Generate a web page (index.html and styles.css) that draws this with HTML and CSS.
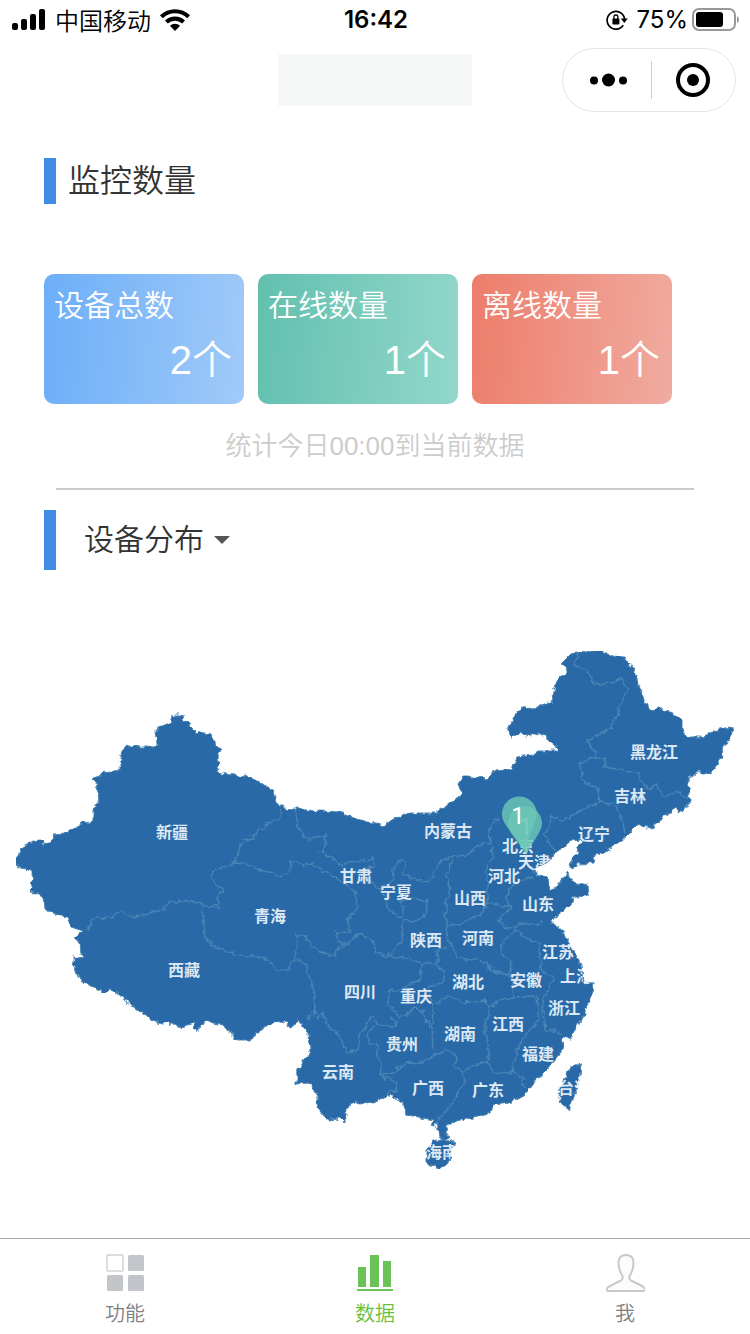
FILE: index.html
```html
<!DOCTYPE html>
<html lang="zh-CN">
<head>
<meta charset="utf-8">
<meta name="viewport" content="width=device-width">
<title>监控数量</title>
<link rel="stylesheet" href="styles.css">
</head>
<body>
<div class="status">
  <div class="status-left">
    <svg width="34" height="22" viewBox="0 0 34 22" aria-hidden="true"><rect x="0" y="14" width="6" height="7" rx="2"/><rect x="9" y="10" width="6" height="11" rx="2"/><rect x="18" y="5" width="6" height="16" rx="2"/><rect x="27" y="0" width="6" height="21" rx="2"/></svg>
    <span class="carrier">中国移动</span>
    <svg width="30" height="22" viewBox="0 0 30 22" aria-hidden="true"><path d="M0 6.300a21.500 21.500 0 0 1 30 0l-2.800 3a17.500 17.500 0 0 0-24.400 0z"/><path d="M5 11.600a14.400 14.400 0 0 1 20 0l-2.800 3a10.300 10.300 0 0 0-14.400 0z"/><path d="M9.900 16.800a7.300 7.300 0 0 1 10.200 0L15 22z"/></svg>
  </div>
  <time class="clock">16:42</time>
  <div class="status-right">
    <svg width="22" height="20" viewBox="0 0 22 20" aria-hidden="true"><path d="M17.200 15.200A8.800 8.800 0 1 1 18.600 9" fill="none" stroke="#000" stroke-width="1.700"/><path d="M14.800 8.600h7l-3.500 4.400z"/><rect x="6.400" y="8.600" width="7" height="5.800" rx="1"/><path d="M7.900 9V7a2 2 0 0 1 4 0v2" fill="none" stroke="#000" stroke-width="1.300"/></svg>
    <span class="percent">75%</span>
    <svg width="48" height="24" viewBox="0 0 48 24" aria-hidden="true"><rect x="1" y="1" width="42" height="21" rx="6" fill="none" stroke="#999" stroke-width="2"/><rect x="4" y="4" width="27" height="15" rx="3"/><path d="M45 8q2 1 2 3.500T45 15z" fill="#999"/></svg>
  </div>
</div>
<header class="nav">
  <div class="nav-title"></div>
  <div class="capsule">
    <button class="capsule-btn" type="button" aria-label="更多"><svg width="38" height="14" viewBox="0 0 38 14"><circle cx="4" cy="7.500" r="4"/><circle cx="18.500" cy="7" r="6.500"/><circle cx="33" cy="7.500" r="4"/></svg></button>
    <button class="capsule-btn" type="button" aria-label="关闭"><svg width="34" height="34" viewBox="0 0 34 34"><circle cx="17" cy="17" r="15" fill="none" stroke="#000" stroke-width="4"/><circle cx="17" cy="17" r="6"/></svg></button>
  </div>
</header>
<main>
  <h1 class="section-title">监控数量</h1>
  <section class="cards">
    <article class="card card-total"><h2>设备总数</h2><p>2个</p></article>
    <article class="card card-online"><h2>在线数量</h2><p>1个</p></article>
    <article class="card card-offline"><h2>离线数量</h2><p>1个</p></article>
  </section>
  <p class="note">统计今日00:00到当前数据</p>
  <hr class="rule">
  <div class="picker">
    <select class="picker-select" aria-label="设备分布"><option>设备分布</option></select>
    <svg width="16" height="8" viewBox="0 0 16 8" aria-hidden="true"><path d="M0 0h16L8 8z" fill="#555"/></svg>
  </div>
  <svg class="map" viewBox="0 570 750 668" role="img" aria-label="设备分布地图">
    <defs>
      <path id="land" d="M16 859L18 855 21 848 27 845 32 842 40 841 43 844 49 843 54 835 65 834 72 828 82 824 93 820 93 810 99 801 97 792 96 782 93 779 102 774 110 771 119 772 119 762 122 752 126 744 134 747 147 747 152 748 157 746 156 729 162 726 170 723 172 715 183 715 184 720 195 731 211 735 214 742 220 750 218 757 219 763 217 772 226 774 250 777 261 782 272 790 276 800 283 808 318 811 343 812 350 817 367 822 376 823 383 826 395 818 410 813 437 813 450 802 463 795 459 785 462 777 473 777 485 779 495 771 512 769 518 757 533 754 540 751 558 751 553 743 540 733 526 737 520 734 511 737 507 732 512 720 521 706 533 709 551 702 553 690 560 678 567 673 566 667 561 664 570 655 600 651 613 656 624 657 634 670 640 690 648 708 662 709 670 712 683 720 683 729 687 737 703 737 712 732 734 727 730 737 723 747 720 760 711 774 699 772 689 778 690 800 687 806 682 812 676 808 663 818 655 823 654 829 637 825 627 835 612 848 605 853 596 855 594 863 580 864 572 868 570 863 582 842 581 839 572 840 555 853 548 862 538 867 532 867 537 875 548 878 550 889 553 890 568 873 572 882 588 885 589 895 573 898 572 905 557 915 552 923 563 930 569 943 578 957 582 970 583 982 593 983 592 993 583 1017 570 1038 563 1038 562 1052 547 1070 536 1080 528 1092 517 1100 493 1105 490 1112 478 1117 460 1120 450 1122 447 1130 450 1138 441 1140 438 1130 437 1120 435 1128 431 1126 433 1120 408 1115 403 1110 403 1102 388 1094 377 1101 360 1104 355 1102 346 1108 346 1124 340 1118 327 1119 317 1108 318 1097 310 1083 297 1084 297 1073 302 1063 310 1053 309 1033 304 1028 297 1019 293 1027 285 1023 275 1021 257 1033 252 1040 233 1040 231 1032 223 1025 205 1021 197 1033 194 1023 180 1027 172 1023 162 1024 151 1019 143 1013 132 1006 124 999 115 991 108 990 105 993 90 985 78 978 76 971 73 965 73 957 82 958 80 947 75 937 83 931 71 927 68 916 57 914 45 908 43 898 37 893 28 892 33 887 32 872 28 869 18 868ZM433 1142L443 1139 456 1143 452 1149 450 1160 438 1169 427 1163 427 1150ZM574 1064L581 1066 580 1078 575 1094 569 1110 560 1102 561 1087 567 1072Z"/>
      <clipPath id="coast"><use href="#land"/></clipPath>
      <filter id="rough" x="0" y="0" width="100%" height="100%">
        <feTurbulence type="fractalNoise" baseFrequency="0.16" numOctaves="2" seed="4" result="noise"/>
        <feDisplacementMap in="SourceGraphic" in2="noise" scale="7" xChannelSelector="R" yChannelSelector="G"/>
      </filter>
    </defs>
    <g filter="url(#rough)">
    <use href="#land" class="land"/>
    <path class="borders" d="M88 930L95 917 112 918 121 911 128 916 140 917 152 912 162 910 167 904 180 901 193 901 203 906 220 907 217 897 223 891 215 882 211 872 235 863 243 840 253 838 260 829 268 824 278 820 282 810M295 809L298 827 307 840 325 835 326 843 320 851 335 860 342 867 348 862 367 861 373 858 373 867 360 872 366 881 380 888 392 882 395 865 402 859 406 863 402 873 413 879 427 883 442 860 450 857 467 855 478 845 490 843 489 830 495 818 500 820M380 888L387 900 387 908 400 917 406 907 399 902 412 897 427 902 425 917 412 922 402 920 402 940 392 953 387 957 377 953 373 942 360 933 352 940 345 947 338 947 335 957 323 953 312 948 307 937 297 935 295 957 288 970 277 970 267 958 243 956 217 948 205 938 203 907M235 863L242 862 260 870 270 872 282 877 291 870 291 861 303 865 313 863 327 873 342 882 355 892 358 907 348 920 350 932 335 933 339 942 347 945M295 957L307 967 313 987 315 1007 308 1020M315 1007L317 1020 323 1013 328 1027 337 1032 347 1052 358 1050 360 1035 372 1015 377 1025 397 1027 390 1015M387 957L403 957 423 963 420 980 400 990 390 990 388 1003 400 1017 417 1008 423 1013 430 1027M423 963L437 965 445 973 443 983 427 987 433 1005 432 1030 435 1050M377 1025L368 1033 368 1043 377 1045 377 1057 382 1063 380 1075 393 1072 407 1062 420 1063 435 1055 448 1050 457 1057 455 1067 463 1072 477 1063 488 1062M380 1075L397 1083 395 1090 387 1094M453 858L447 877 450 890 446 903 446 927 448 940 458 958 483 961 495 972 510 977M437 965L438 948 448 948M446 927L463 923 483 913 487 903 512 907M492 845L493 858 486 870 488 887 487 903M533 875L513 885 505 898 512 907 499 920 505 927 515 929 520 923 537 925 542 920M508 937L502 943 502 955 512 962 510 977M508 937L517 930 528 940 540 942 541 970 553 980 542 1000 545 1030 555 1031 563 1035M487 961L488 969 502 972 512 976 513 997 528 996 537 997M435 1003L448 995 463 1002 485 1000 490 1008 500 1000 513 997M490 1008L485 1027 488 1043 488 1062 493 1072 512 1073 517 1050 527 1033 540 1020 537 997M463 1072L465 1080 450 1107 438 1119M512 1073L522 1077 525 1088M578 655L573 665 588 670 593 683 612 684 620 679 628 688 619 707 618 715 610 728 587 741 595 752 595 758 579 763 585 785 597 787 600 802 580 811 561 822 552 815 545 837 555 850M595 758L605 758 605 767 625 771 638 773 642 783 649 789 657 785 663 797 677 792 690 799M600 802L615 805 622 820 625 833"/>
    </g>
    <g class="labels" clip-path="url(#coast)">
      <text x="654" y="758">黑龙江</text><text x="630" y="802">吉林</text><text x="594" y="840">辽宁</text><text x="448" y="837">内蒙古</text><text x="172" y="838">新疆</text><text x="356" y="882">甘肃</text><text x="396" y="898">宁夏</text><text x="518" y="852">北京</text><text x="534" y="868">天津</text><text x="504" y="882">河北</text><text x="470" y="904">山西</text><text x="538" y="910">山东</text><text x="270" y="922">青海</text><text x="426" y="946">陕西</text><text x="478" y="944">河南</text><text x="558" y="958">江苏</text><text x="184" y="976">西藏</text><text x="360" y="998">四川</text><text x="416" y="1002">重庆</text><text x="468" y="988">湖北</text><text x="526" y="986">安徽</text><text x="576" y="982">上海</text><text x="564" y="1014">浙江</text><text x="508" y="1030">江西</text><text x="460" y="1040">湖南</text><text x="402" y="1050">贵州</text><text x="538" y="1060">福建</text><text x="338" y="1078">云南</text><text x="428" y="1094">广西</text><text x="488" y="1096">广东</text><text x="574" y="1094">台湾</text><text x="442" y="1158">海南</text>
    </g>
    <g class="pins">
      <path opacity="0.800" d="M526 854L511 833a17 17 0 1 1 28 0Z"/>
      <text x="526" y="835" opacity="0.600">1</text>
      <path opacity="0.800" d="M525 850L505 824a17.500 17.500 0 1 1 30 -2Z"/>
      <text x="518" y="824">1</text>
    </g>
  </svg>
</main>
<nav class="tabs">
  <a class="tab" href="#features"><svg width="40" height="40" viewBox="0 0 40 40" aria-hidden="true"><rect x="2" y="2" width="16" height="16" rx="1" fill="#fff" stroke="#d0d1d3" stroke-width="1.500"/><g fill="#c2c5c9"><rect x="23" y="2" width="16" height="16" rx="1.500"/><rect x="2" y="22" width="16" height="16" rx="1.500"/><rect x="23" y="22" width="16" height="16" rx="1.500"/></g></svg><span>功能</span></a>
  <a class="tab tab-active" href="#data" aria-current="page"><svg width="40" height="40" viewBox="0 0 40 40" fill="#6bc257" aria-hidden="true"><rect x="3" y="14" width="8" height="20"/><rect x="15" y="2" width="9" height="32"/><rect x="28" y="8" width="8" height="26"/><rect x="2" y="36" width="36" height="2"/></svg><span>数据</span></a>
  <a class="tab" href="#me"><svg width="40" height="40" viewBox="0 0 40 40" fill="#fcfcfc" stroke="#c9c9c9" stroke-width="2" aria-hidden="true"><path d="M21 2C16 2 13.500 5 13.500 10C13.500 16 14.500 18 17 22C18.500 25 17.500 27 14 28.500L6 32.500C2 34.500 2 35 2 37Q2 38 4 38H38Q40 38 40 36.500C40 35 39 34 36 32.500L28 28.500C24.500 27 23.500 25 25 22C27.500 18 28.500 16 28.500 10C28.500 5 26 2 21 2Z"/></svg><span>我</span></a>
</nav>
</body>
</html>
```
FILE: styles.css
```css
* { box-sizing: border-box; }

body {
  margin: 0;
  min-height: 100vh;
  display: flex;
  flex-direction: column;
  background: #fff;
  color: #333;
  font-family: "Liberation Sans", "Noto Sans CJK SC", sans-serif;
  font-weight: 350;
}

h1, h2, p { margin: 0; font-weight: 350; }
svg { display: block; flex: none; }
button { border: 0; padding: 0; background: none; }

.status {
  display: grid;
  grid-template-columns: 1fr auto 1fr;
  align-items: center;
  height: 40px;
  padding: 0 10px 0 12px;
  color: #000;
  font-family: Inter, "Noto Sans CJK SC", sans-serif;
  font-size: 24px;
  line-height: 40px;
}
.status-left { display: flex; align-items: center; gap: 9px; }
.status-right { display: flex; align-items: center; justify-content: flex-end; }
.clock { font-weight: 600; }
.carrier { font-family: "Noto Sans CJK SC", sans-serif; }
.percent { margin: 0 4px 0 8px; font-weight: 400; }

.nav {
  display: grid;
  grid-template-columns: 1fr 194px 1fr;
  align-items: center;
  height: 80px;
  padding: 0 14px;
}
.nav-title { grid-column: 2; height: 52px; background: #f6f8f8; }
.capsule {
  justify-self: end;
  display: flex;
  align-items: center;
  width: 174px;
  height: 64px;
  border: 1px solid #e5e5e5;
  border-radius: 32px;
}
.capsule-btn {
  flex: 1 1 0;
  display: flex;
  align-items: center;
  justify-content: center;
  height: 38px;
}
.capsule-btn:first-child { padding-left: 4px; }
.capsule-btn + .capsule-btn { border-left: 1px solid #ccc; }

main { flex: 1; }

.section-title {
  margin: 38px 44px 0;
  padding-left: 12px;
  border-left: 12px solid #3f8de4;
  font-size: 32px;
  line-height: 46px;
}

.cards {
  display: grid;
  grid-template-columns: repeat(3, 1fr);
  gap: 14px;
  margin: 70px 78px 0 44px;
}
.card {
  height: 130px;
  padding: 8px 12px 0 10px;
  border-radius: 10px;
  color: #fff;
}
.card h2 { font-size: 30px; line-height: 48px; }
.card p { font-size: 40px; line-height: 60px; text-align: right; }
.card-total { background: linear-gradient(95deg, #6caef8, #a0caf8); }
.card-online { background: linear-gradient(95deg, #62c0ae, #92d7cb); }
.card-offline { background: linear-gradient(95deg, #ed7d6a, #f0aba0); }

.note {
  margin-top: 22px;
  color: #ccc;
  font-size: 26px;
  line-height: 40px;
  text-align: center;
}
.rule {
  height: 2px;
  margin: 22px 56px 20px;
  border: 0;
  background: #ccc;
}

.picker {
  display: flex;
  align-items: center;
  gap: 10px;
  height: 60px;
  margin: 0 44px;
  padding-left: 28px;
  border-left: 12px solid #3f8de4;
}
.picker-select {
  appearance: none;
  padding: 0;
  border: 0;
  background: none;
  color: #333;
  font: inherit;
  font-size: 30px;
  line-height: 60px;
}

.map { width: 100%; height: auto; }
.land { fill: #2c69a7; stroke: #4f8ab8; stroke-width: 1; }
.borders { fill: none; stroke: #4685b5; stroke-width: 1.5; }
.labels {
  fill: #dce8f3;
  font-family: "Noto Sans CJK SC", sans-serif;
  font-size: 16px;
  font-weight: 700;
  text-anchor: middle;
}
.pins { fill: #6dc8b5; }
.pins text {
  fill: #fff;
  font-family: Roboto, sans-serif;
  font-size: 24px;
  font-weight: 400;
  text-anchor: middle;
}

.tabs {
  display: grid;
  grid-template-columns: repeat(3, 1fr);
  height: 96px;
  border-top: 1px solid #aaa;
}
.tab {
  display: flex;
  flex-direction: column;
  align-items: center;
  padding-top: 14px;
  color: #7d7e83;
  font-size: 20px;
  line-height: 42px;
  text-decoration: none;
}
.tab-active { color: #67c23a; }
```
